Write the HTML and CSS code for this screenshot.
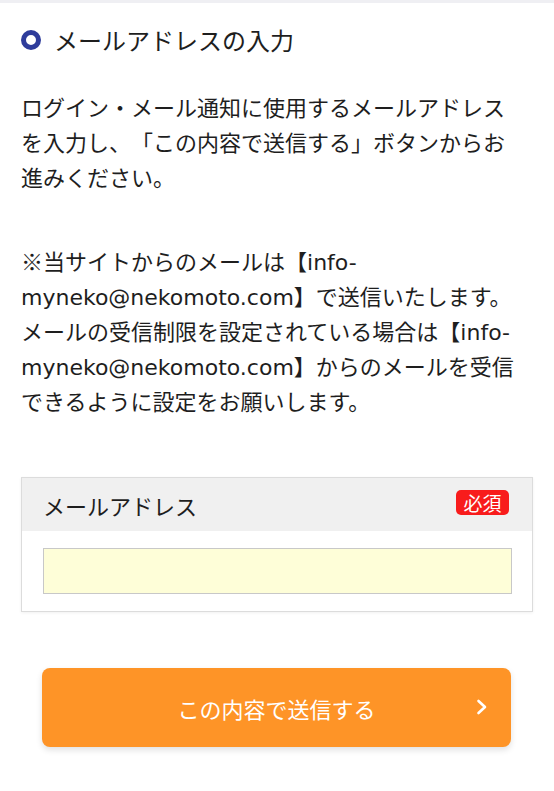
FILE: index.html
```html
<!DOCTYPE html>
<html lang="ja">
<head>
<meta charset="utf-8">
<title>メールアドレスの入力</title>
<link rel="stylesheet" href="styles.css">
</head>
<body>
<div class="topbar"></div>
<main class="page">
  <h1 class="heading"><span class="ring"></span>メールアドレスの入力</h1>
  <p class="text">ログイン・メール通知に使用するメールアドレスを入力し、「この内容で送信する」ボタンからお進みください。</p>
  <p class="text note">※当サイトからのメールは【<span class="en">info-</span><span class="en">myneko@nekomoto.com</span>】で送信いたします。メールの受信制限を設定されている場合は【<span class="en">info-</span><span class="en">myneko@nekomoto.com</span>】からのメールを受信できるように設定をお願いします。</p>
  <section class="field">
    <div class="field-head">
      <span class="field-label">メールアドレス</span>
      <span class="badge">必須</span>
    </div>
    <div class="field-body">
      <input class="input" type="email" aria-label="メールアドレス">
    </div>
  </section>
  <button class="submit" type="button">
    <span class="submit-label">この内容で送信する</span>
    <svg class="chev" width="12" height="16" viewBox="0 0 12 16"><path d="M2.5 2 L9 8 L2.5 14" fill="none" stroke="#fff" stroke-width="2.6" stroke-linecap="round" stroke-linejoin="round"/></svg>
  </button>
</main>
</body>
</html>
```

FILE: styles.css
```css
* { box-sizing: border-box; }
html, body { margin: 0; padding: 0; background: #fff; }
body {
  font-family: "Noto Sans CJK JP", "Noto Sans", sans-serif;
  color: #1e1e1e;
  text-spacing-trim: space-all;
}
.topbar { height: 3px; background: #efeff3; }
.page { padding: 0 21px 40px; }
.heading {
  display: flex;
  align-items: center;
  margin: 20px 0 0;
  height: 34px;
  font-size: 24px;
  font-weight: normal;
  line-height: 34px;
}
.ring {
  width: 20px;
  height: 20px;
  border: 5px solid #2e3c9b;
  border-radius: 50%;
  margin-right: 13px;
  flex: none;
}
.text {
  margin: 32px 9px 0 0;
  font-size: 22px;
  line-height: 35px;
}
.en {
  font-family: "DejaVu Sans", "Noto Sans", sans-serif;
  line-height: 1;
}
.note { margin-top: 49px; }
.field {
  margin-top: 59px;
  border: 1px solid #dcdcdc;
  box-shadow: 0 1px 3px rgba(0,0,0,0.06);
}
.field-head {
  display: flex;
  align-items: center;
  justify-content: space-between;
  height: 53px;
  padding: 0 23px 0 21px;
  background: #f0f0f0;
}
.field-label { font-size: 22px; line-height: 30px; }
.badge {
  background: #f81c1c;
  color: #fff;
  font-size: 19px;
  line-height: 25px;
  height: 25px;
  width: 53px;
  text-align: center;
  border-radius: 5px;
  margin-top: -4px;
}
.field-body { padding: 17px 20px 17px 21px; }
.input {
  display: block;
  width: 100%;
  height: 46px;
  margin: 0;
  border: 1px solid #c8c8c8;
  background: #fefed8;
  font: inherit;
}
.submit {
  position: relative;
  display: flex;
  align-items: center;
  justify-content: center;
  width: 469px;
  height: 79px;
  margin: 56px 0 0 21px;
  border: 0;
  border-radius: 8px;
  background: #fe9427;
  color: #fff;
  font-family: inherit;
  font-size: 22px;
  box-shadow: 0 3px 6px rgba(0,0,0,0.12);
}
.submit-label { line-height: 30px; }
.chev { position: absolute; right: 23px; top: 31px; }
```
